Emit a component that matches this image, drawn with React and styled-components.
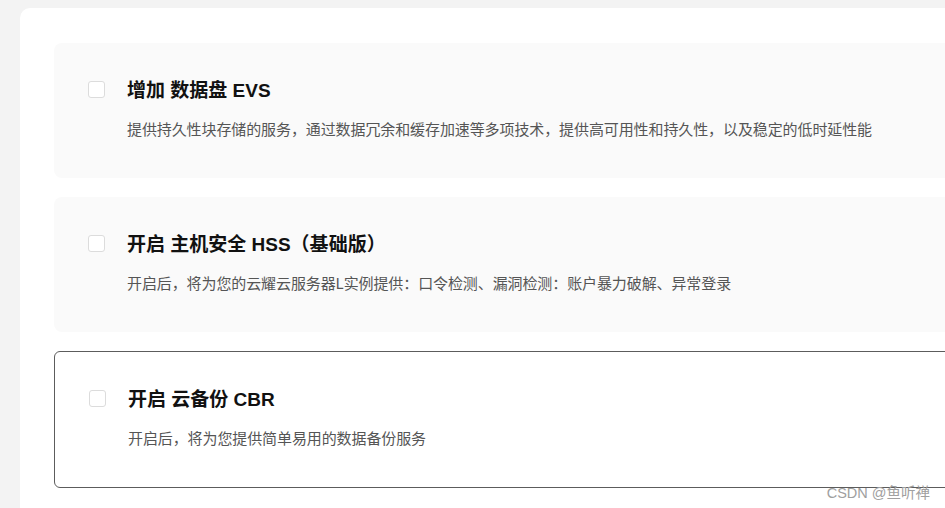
import React from 'react';
import styled, {createGlobalStyle} from 'styled-components';

const GlobalStyle = createGlobalStyle`
	html, body {
		margin: 0;
		padding: 0;
		background: #f3f3f3;
		overflow: hidden;
		font-family: "Noto Sans CJK SC", "Noto Sans", sans-serif;
	}
`

const options = [
	{
		title: '增加 数据盘 EVS',
		desc: '提供持久性块存储的服务，通过数据冗余和缓存加速等多项技术，提供高可用性和持久性，以及稳定的低时延性能',
	},
	{
		title: '开启 主机安全 HSS（基础版）',
		desc: '开启后，将为您的云耀云服务器L实例提供：口令检测、漏洞检测：账户暴力破解、异常登录',
	},
	{
		title: '开启 云备份 CBR',
		desc: '开启后，将为您提供简单易用的数据备份服务',
		active: true,
	},
];

const App = () => {
	return (
		<Page>
			<GlobalStyle />
			<Panel>
				{options.map(item => (
					<Card key={item.title} $active={item.active}>
						<Check />
						<Body>
							<Title>{item.title}</Title>
							<Desc>{item.desc}</Desc>
						</Body>
					</Card>
				))}
			</Panel>
			<Watermark>CSDN @鱼听禅</Watermark>
		</Page>
	)
}

const Page = styled.div`
	position: relative;
	width: 945px;
	height: 508px;
	overflow: hidden;
	padding: 8px 0 0 20px;
	box-sizing: border-box;
`

const Panel = styled.div`
	width: 1100px;
	min-height: 600px;
	background: #fff;
	border-radius: 10px;
	padding: 35px 34px;
	box-sizing: border-box;
	display: flex;
	flex-direction: column;
	gap: 19px;
`

const Card = styled.div`
	display: flex;
	align-items: flex-start;
	gap: 22px;
	height: 101px;
	padding: 34px 34px 0;
	box-sizing: content-box;
	background: ${p => p.$active ? '#fff' : '#fafafa'};
	border: ${p => p.$active ? '1px solid #5c5c5c' : 'none'};
	border-radius: ${p => p.$active ? '6px' : '8px'};
`

const Check = styled.span`
	flex: none;
	width: 15px;
	height: 15px;
	margin-top: 4px;
	border: 1px solid #dcdcdc;
	border-radius: 3px;
	background: #fff;
`

const Body = styled.div`
	display: flex;
	flex-direction: column;
	gap: 13px;
`

const Title = styled.div`
	font-family: "Liberation Sans", "Noto Sans CJK SC", sans-serif;
	font-size: 19px;
	line-height: 28px;
	font-weight: 700;
	color: #111;
`

const Desc = styled.div`
	font-size: 15px;
	line-height: 22px;
	letter-spacing: -0.1px;
	color: #555;
`

const Watermark = styled.div`
	position: absolute;
	right: 15px;
	bottom: 6px;
	font-size: 14.5px;
	color: #a0a0a0;
	font-family: "Liberation Sans", "Noto Sans CJK SC", sans-serif;
`

export default App;
